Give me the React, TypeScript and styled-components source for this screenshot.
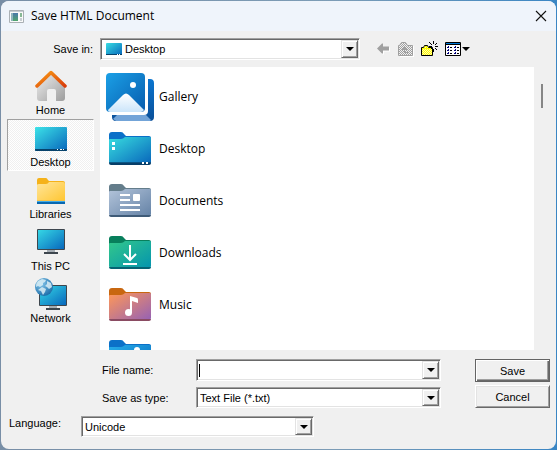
import React, { useId, useState } from "react";
import styled, { createGlobalStyle, css } from "styled-components";

const GlobalStyle = createGlobalStyle`
  *, *::before, *::after { box-sizing: border-box; }
  body {
    margin: 0;
    background: linear-gradient(90deg, #788ea6, #7c9cb6 60%, #3a86c4);
    color: #000;
    font: 11px/14px "Liberation Sans", Arial, sans-serif;
    overflow: hidden;
  }
  button, input, select { font: inherit; color: inherit; margin: 0; }
  svg { display: block; flex: none; }
`;

const Page = styled.div`
  display: flex;
  min-height: 100vh;
  padding: 1px;
`;

const Dialog = styled.form`
  flex: 1;
  min-width: 0;
  background: #f0f0f0;
  border-radius: 8px;
  overflow: hidden;
`;

const TitleBar = styled.header`
  display: flex;
  align-items: center;
  gap: 7px;
  height: 30px;
  padding: 0 9px 0 8px;
  background: #eff4fb;
`;

const Title = styled.h1`
  flex: 1;
  margin: 0;
  font: 400 12px/16px "Open Sans", "Segoe UI", sans-serif;
`;

const IconButton = styled.button`
  display: flex;
  align-items: center;
  justify-content: center;
  padding: 0;
  border: 0;
  background: none;
`;

const LookInBar = styled.div`
  display: flex;
  align-items: center;
  padding: 7px 6px;
`;

const LookInLabel = styled.label`
  width: 93px;
  padding-right: 7px;
  text-align: right;
`;

const Tools = styled.div`
  display: flex;
  align-items: center;
  gap: 7px;
  margin-left: 17px;
`;

const sunken = css`
  border: 1px solid;
  border-color: #a0a0a0 #fff #fff #a0a0a0;
  box-shadow: inset 1px 1px #696969, inset -1px -1px #e3e3e3;
`;

const Field = styled.div<{ $width: number; $short?: boolean }>`
  ${sunken}
  position: relative;
  display: flex;
  align-items: center;
  flex: 0 1 ${(p) => p.$width}px;
  height: ${(p) => (p.$short ? 21 : 22)}px;
  background: #fff;
`;

const FieldIcon = styled.span`
  margin-left: 5px;
`;

const Choice = styled.select`
  flex: 1;
  min-width: 0;
  height: 18px;
  padding: 0 20px 0 3px;
  border: 0;
  background: transparent;
  appearance: none;
  outline: 0;
`;

const NameInput = styled.input`
  flex: 1;
  min-width: 0;
  height: 18px;
  padding: 0 20px 0 3px;
  border: 0;
  background: transparent;
  caret-color: transparent;
  outline: 0;
`;

const Caret = styled.span`
  position: absolute;
  left: 2px;
  top: 4px;
  width: 1px;
  height: 13px;
  background: #000;
`;

const DropMark = styled.span`
  position: absolute;
  top: 1px;
  right: 1px;
  bottom: 1px;
  width: 17px;
  display: flex;
  align-items: center;
  justify-content: center;
  background: #f0f0f0;
  border: 1px solid;
  border-color: #e3e3e3 #696969 #696969 #e3e3e3;
  box-shadow: inset 1px 1px #fff, inset -1px -1px #a0a0a0;
  pointer-events: none;
`;

const Browser = styled.main`
  display: flex;
  gap: 6px;
  padding-left: 6px;
`;

const Places = styled.nav`
  width: 87px;
`;

const Place = styled.button<{ $active: boolean }>`
  display: flex;
  flex-direction: column;
  align-items: center;
  gap: 2px;
  width: 100%;
  height: 52px;
  padding: 2px 0 0;
  border: 1px solid transparent;
  background: none;
  line-height: 13px;
  ${(p) =>
    p.$active &&
    css`
      border-color: #a0a0a0 #fff #fff #a0a0a0;
      background: repeating-conic-gradient(#fff 0 25%, #f0f0f0 0 50%) 0 0 / 2px 2px;
    `}
`;

const FileList = styled.ul`
  flex: 1;
  min-width: 0;
  height: 283px;
  margin: 0;
  padding: 4px 6px;
  overflow: hidden;
  list-style: none;
  background: #fff;
`;

const FileItem = styled.li`
  display: flex;
  align-items: center;
  gap: 5px;
  height: 52px;
  font: 12px/16px "Open Sans", "Segoe UI", sans-serif;
`;

const ScrollTrack = styled.div`
  width: 16px;
  padding: 17px 1px 0;
`;

const ScrollThumb = styled.div`
  width: 2px;
  height: 24px;
  background: #868686;
`;

const SaveRows = styled.div`
  display: flex;
  justify-content: space-between;
  padding: 9px 6px 0 101px;
`;

const Rows = styled.div`
  flex: 0 1 339px;
  display: flex;
  flex-direction: column;
  gap: 6px;
`;

const Row = styled.div`
  display: flex;
  align-items: center;
`;

const RowLabel = styled.label<{ $width: number }>`
  flex: none;
  width: ${(p) => p.$width}px;
`;

const Actions = styled.div`
  display: flex;
  flex-direction: column;
  gap: 3px;
  width: 75px;
`;

const PushButton = styled.button<{ $primary?: boolean }>`
  height: 23px;
  padding: 0;
  background: #f0f0f0;
  border: 1px solid;
  border-color: ${(p) => (p.$primary ? "#646464" : "#fff #696969 #696969 #fff")};
  box-shadow: ${(p) =>
    p.$primary
      ? "inset 1px 1px #fff, inset -1px -1px #696969, inset -2px -2px #a0a0a0"
      : "inset 1px 1px #e3e3e3, inset -1px -1px #a0a0a0"};
`;

const LanguageRow = styled.div`
  display: flex;
  padding: 8px 8px 12px;
`;

const Arrow = () => (
  <svg width="8" height="4" viewBox="0 0 8 4">
    <path d="M0 0h8L4 4z" />
  </svg>
);

type Stops = [string, string];

function Gradient({ id, stops, vertical }: { id: string; stops: Stops; vertical?: boolean }) {
  return (
    <linearGradient id={id} x1="0" y1="0" x2={vertical ? "0" : "1"} y2="1">
      <stop stopColor={stops[0]} />
      <stop offset="1" stopColor={stops[1]} />
    </linearGradient>
  );
}

const AppIcon = () => (
  <svg width="15" height="13" viewBox="0 0 15 13">
    <defs><Gradient id="appg" stops={["#4a78aa", "#4fa56c"]} vertical /></defs>
    <path fill="#fafafa" stroke="#aab0b5" d="M.5.5h14v12H.5z" />
    <path fill="#c5cbd0" d="M1 1h13v1H1z" />
    <path fill="url(#appg)" d="M2 3h7v8H2z" />
    <path fill="#8eb5bd" d="M2 3h2v8H2z" />
    <path fill="#87b894" d="M11 3h2v4h-2z" />
    <path fill="#c7ced2" d="M11 8h2v3h-2z" />
  </svg>
);

const CloseIcon = () => (
  <svg width="12" height="12" viewBox="0 0 12 12">
    <path d="M1 1l10 10M11 1L1 11" stroke="#111" strokeWidth="1.1" />
  </svg>
);

const BackIcon = () => (
  <svg width="14" height="12" viewBox="0 0 14 12">
    <path fill="#fff" d="M1 6.500l5 5h1v-3h6v-4h-1v3H6v3H5z" />
    <path fill="#a0a0a0" d="M0 5.500l5-5h1V3.500h6v4H6v3H5z" />
  </svg>
);

const UpIcon = () => (
  <svg width="16" height="15" viewBox="0 0 16 15">
    <defs>
      <pattern id="upd" width="2" height="2" patternUnits="userSpaceOnUse">
        <path fill="#f0f0f0" d="M0 0h2v2H0z" />
        <path fill="#a0a0a0" d="M0 0h1v1H0zM1 1h1v1H1z" />
      </pattern>
    </defs>
    <path fill="#fff" d="M2 15h14V4h-1v10H2z" />
    <path fill="url(#upd)" stroke="#a0a0a0" d="M.5 13.500V3.500h1l2-3h4l2 3h5v10z" />
    <path fill="#a0a0a0" d="M6 5h1v1h1v1h1v1H7v2h4v1H6V8H4V7h1V6h1z" />
  </svg>
);

const NewFolderIcon = () => (
  <svg width="17" height="16" viewBox="0 0 17 16">
    <defs>
      <pattern id="yd" width="2" height="2" patternUnits="userSpaceOnUse">
        <path fill="#ff0" d="M0 0h2v2H0z" />
        <path fill="#fff9b0" d="M0 0h1v1H0zM1 1h1v1H1z" />
      </pattern>
    </defs>
    <path fill="url(#yd)" stroke="#000" d="M.5 14.500V6.500h2l1-2h3l1 2h4v8z" />
    <path fill="#ff0" d="M4 5h2v1H4zM1 7h10v1H1z" />
    <path
      d="M12 0h1v3h-1zM12 8h1v3h-1zM8 5h3v1H8zM14 5h3v1h-3zM8 1h1v1H8zM9 2h1v1H9zM10 3h1v1h-1zM14 3h1v1h-1zM15 2h1v1h-1zM14 7h1v1h-1zM15 8h1v1h-1zM10 7h1v1h-1z"
    />
  </svg>
);

const ViewsIcon = () => (
  <svg width="26" height="14" viewBox="0 0 26 14">
    <path fill="#fff" stroke="#000" d="M.5.500h15v13H.5z" />
    <path fill="#0078d7" d="M1 1h14v1H1z" />
    <path d="M1 2h14v1H1zM5 5h2v1H5zM12 5h2v1h-2zM5 8h2v1H5zM12 8h2v1h-2zM5 11h2v1H5zM12 11h2v1h-2z" />
    <path fill="#00007b" d="M3 4h1v2H2V5h1zM10 4h1v2H9V5h1zM3 7h1v2H2V8h1zM10 7h1v2H9V8h1zM3 10h1v2H2v-1h1zM10 10h1v2H9v-1h1z" />
    <path d="M17 5h8l-4 4z" />
  </svg>
);

const MiniDesktopIcon = () => (
  <svg width="16" height="12" viewBox="0 0 16 12">
    <defs><Gradient id="mdg" stops={["#38dce2", "#0869bd"]} /></defs>
    <rect width="16" height="12" rx="1" fill="url(#mdg)" />
    <path fill="#07436c" d="M0 11h16v1H0z" />
    <path fill="#fff" d="M11 11h1v1h-1zM13 11h1v1h-1z" />
  </svg>
);

const HomeIcon = () => (
  <svg width="32" height="32" viewBox="0 0 32 32">
    <defs>
      <Gradient id="hw" stops={["#eeeeee", "#9d9d9d"]} />
      <Gradient id="hr" stops={["#f99b16", "#d93c0a"]} />
    </defs>
    <path fill="url(#hw)" d="M2 15L16 4l14 11v13q0 3-3 3h-6V21q0-2-2-2h-5q-2 0-2 2v10H5q-3 0-3-3z" />
    <path fill="none" stroke="url(#hr)" strokeWidth="3.500" strokeLinejoin="round" strokeLinecap="round" d="M2 16l14-13.500L30 16" />
  </svg>
);

const DesktopPlaceIcon = () => (
  <svg width="32" height="32" viewBox="0 0 32 32">
    <defs><Gradient id="dpg" stops={["#3ce3e8", "#0866bb"]} /></defs>
    <rect y="5" width="32" height="24" rx="1" fill="url(#dpg)" />
    <path fill="#07436c" d="M0 27h32v1q0 1-1 1H1q-1 0-1-1z" />
    <path fill="#fff" d="M22 27h1v1h-1zM25 27h2v1h-2zM28 27h1v1h-1z" />
  </svg>
);

const LibrariesIcon = () => (
  <svg width="32" height="32" viewBox="0 0 32 32">
    <defs><Gradient id="lbg" stops={["#ffe59a", "#ffc631"]} /></defs>
    <path fill="#f5b21a" d="M2 6q0-2 2-2h7q1 0 2 2l1 1h14q2 0 2 2v12H2z" />
    <path fill="url(#lbg)" d="M2 11q0-1 2-1h7q2 0 3-2h14q2 0 2 2v17H2z" />
    <path fill="#f7c24a" d="M2 26h28v1H2z" />
    <path fill="#40abe8" d="M2 27h28v1H2z" />
    <path fill="#0868b1" d="M2 28h28v2H2z" />
  </svg>
);

const Monitor = ({ id }: { id: string }) => (
  <>
    <defs><Gradient id={id} stops={["#35d7e5", "#0868bd"]} /></defs>
    <path fill="#a5adb4" d="M12 22h8v4h-8z" />
    <path fill="#3d464e" d="M9 25h14v2H9z" />
    <rect x="2" y="2" width="28" height="21" rx="1" fill="#3d464e" />
    <path fill={`url(#${id})`} d="M3 3h26v19H3z" />
  </>
);

const PcIcon = () => (
  <svg width="32" height="32" viewBox="0 0 32 32">
    <g transform="translate(0 1)"><Monitor id="pcg" /></g>
  </svg>
);

const NetworkIcon = () => (
  <svg width="32" height="32" viewBox="0 0 32 32">
    <defs>
      <radialGradient id="glg" cx=".35" cy=".3" r=".75">
        <stop stopColor="#85c7eb" /><stop offset="1" stopColor="#1b6ca8" />
      </radialGradient>
    </defs>
    <g transform="translate(2 5)"><Monitor id="nwg" /></g>
    <circle cx="9" cy="9" r="9" fill="url(#glg)" />
    <path fill="#d9edf5" d="M3 3l4-2 4 1-1 2-2 1v2L5 9 3 8 1 9q0-4 2-6zM12 3l4 2 1 4-3 2-2-2-2-1 2-2zM7 9l4 2-1 3-2 3-2-4-3-1z" opacity=".85" />
  </svg>
);

const GalleryIcon = () => (
  <svg width="48" height="48" viewBox="0 0 48 48">
    <defs>
      <Gradient id="gab" stops={["#1ba0e6", "#075cae"]} />
      <Gradient id="gam" stops={["#ffffff", "#cbe5fa"]} vertical />
      <Gradient id="gas" stops={["#0a75cf", "#0b4f98"]} vertical />
    </defs>
    <path fill="url(#gas)" d="M42 6h2q4 0 4 4v34q0 4-4 4H10q-4 0-4-4v-2h32q4 0 4-4z" />
    <path fill="#73a4d8" d="M11 42h29l5 5-1 1H10l-3-2z" />
    <rect width="39" height="39" rx="4" fill="url(#gab)" />
    <path fill="url(#gam)" d="M2 37l15-15q3-3 6 0l15 15q-1 2-3 2H4q-2 0-2-2z" />
    <circle cx="27" cy="12" r="3" fill="#fff" />
  </svg>
);

type FolderProps = { tab: string; face: Stops; edge: string; children?: React.ReactNode };

function Folder({ tab, face, edge, children }: FolderProps) {
  const id = useId();
  return (
    <svg width="48" height="48" viewBox="0 0 48 48">
      <defs><Gradient id={id} stops={face} /></defs>
      <path fill={tab} d="M3 10q0-3 3-3h9q2 0 3 2l2 2h23q2 0 2 2v8H3z" />
      <path fill={`url(#${id})`} d="M3 15q0-1 1-1h11q2 0 4-2h25q1 0 1 1v24q0 2-2 2H5q-2 0-2-2z" />
      <path fill={edge} d="M3 38h42q0 2-2 2H5q-2 0-2-2z" />
      {children}
    </svg>
  );
}

const DesktopFolder = () => (
  <Folder tab="#0b70c8" face={["#38dddf", "#0865bb"]} edge="#073e68">
    <path fill="#073e68" opacity=".7" d="M3 37h42v1H3z" />
    <path fill="#fff" d="M6 17h3v3H6zM6 22h3v3H6zM36 37h2v2h-2zM40 37h2v2h-2z" />
  </Folder>
);

const DocumentsFolder = () => (
  <Folder tab="#647d8b" face={["#b3c4da", "#6482a6"]} edge="#3f5b78">
    <path fill="#fff" d="M14 17h10v2H14zM14 22h10v2H14zM14 27h20v2H14zM14 32h20v2H14zM28 17h5q1 0 1 1v5q0 1-1 1h-5q-1 0-1-1v-5q0-1 1-1z" />
  </Folder>
);

const DownloadsFolder = () => (
  <Folder tab="#087f5c" face={["#33c88b", "#0494ae"]} edge="#066373">
    <path fill="none" stroke="#fff" strokeWidth="2" d="M24 16v14M18 25l6 6 6-6M17 35h14" />
  </Folder>
);

const MusicFolder = () => (
  <Folder tab="#c86710" face={["#ff9858", "#9561b5"]} edge="#8a4b62">
    <circle cx="22.500" cy="31.500" r="3.500" fill="#fff" />
    <path fill="#fff" d="M24 15l7 2q1 0 1 2v3l-6-2v12h-2z" />
  </Folder>
);

const PicturesFolder = () => (
  <Folder tab="#0b70c8" face={["#27aeea", "#0869bd"]} edge="#064b8c">
    <circle cx="31" cy="17" r="3" fill="#fff" />
  </Folder>
);

const places = [
  { name: "Home", Icon: HomeIcon },
  { name: "Desktop", Icon: DesktopPlaceIcon },
  { name: "Libraries", Icon: LibrariesIcon },
  { name: "This PC", Icon: PcIcon },
  { name: "Network", Icon: NetworkIcon },
];

const files = [
  { name: "Gallery", Icon: GalleryIcon },
  { name: "Desktop", Icon: DesktopFolder },
  { name: "Documents", Icon: DocumentsFolder },
  { name: "Downloads", Icon: DownloadsFolder },
  { name: "Music", Icon: MusicFolder },
  { name: "", Icon: PicturesFolder },
];

const DropArrow = () => <DropMark><Arrow /></DropMark>;

export default function App() {
  const [place, setPlace] = useState("Desktop");
  const [fileName, setFileName] = useState("");
  return (
    <Page>
      <GlobalStyle />
      <Dialog onSubmit={(e) => e.preventDefault()}>
        <TitleBar>
          <AppIcon />
          <Title>Save HTML Document</Title>
          <IconButton type="button" aria-label="Close"><CloseIcon /></IconButton>
        </TitleBar>
        <LookInBar>
          <LookInLabel htmlFor="folder">Save in:</LookInLabel>
          <Field $width={260}>
            <FieldIcon><MiniDesktopIcon /></FieldIcon>
            <Choice id="folder"><option>Desktop</option></Choice>
            <DropArrow />
          </Field>
          <Tools>
            <IconButton type="button" aria-label="Back" disabled><BackIcon /></IconButton>
            <IconButton type="button" aria-label="Up one level" disabled><UpIcon /></IconButton>
            <IconButton type="button" aria-label="New folder"><NewFolderIcon /></IconButton>
            <IconButton type="button" aria-label="Views"><ViewsIcon /></IconButton>
          </Tools>
        </LookInBar>
        <Browser>
          <Places>
            {places.map(({ name, Icon }) => (
              <Place key={name} type="button" $active={name === place} onClick={() => setPlace(name)}>
                <Icon />
                {name}
              </Place>
            ))}
          </Places>
          <FileList>
            {files.map(({ name, Icon }) => (
              <FileItem key={name}><Icon />{name}</FileItem>
            ))}
          </FileList>
          <ScrollTrack><ScrollThumb /></ScrollTrack>
        </Browser>
        <SaveRows>
          <Rows>
            <Row>
              <RowLabel $width={94} htmlFor="file-name">File name:</RowLabel>
              <Field $width={245}>
                <NameInput id="file-name" value={fileName} onChange={(e) => setFileName(e.target.value)} />
                {fileName === "" && <Caret />}
                <DropArrow />
              </Field>
            </Row>
            <Row>
              <RowLabel $width={94} htmlFor="file-type">Save as type:</RowLabel>
              <Field $width={245} $short>
                <Choice id="file-type"><option>Text File (*.txt)</option></Choice>
                <DropArrow />
              </Field>
            </Row>
          </Rows>
          <Actions>
            <PushButton type="submit" $primary>Save</PushButton>
            <PushButton type="button">Cancel</PushButton>
          </Actions>
        </SaveRows>
        <LanguageRow>
          <RowLabel $width={72} htmlFor="language">Language:</RowLabel>
          <Field $width={233} $short>
            <Choice id="language"><option>Unicode</option></Choice>
            <DropArrow />
          </Field>
        </LanguageRow>
      </Dialog>
    </Page>
  );
}
